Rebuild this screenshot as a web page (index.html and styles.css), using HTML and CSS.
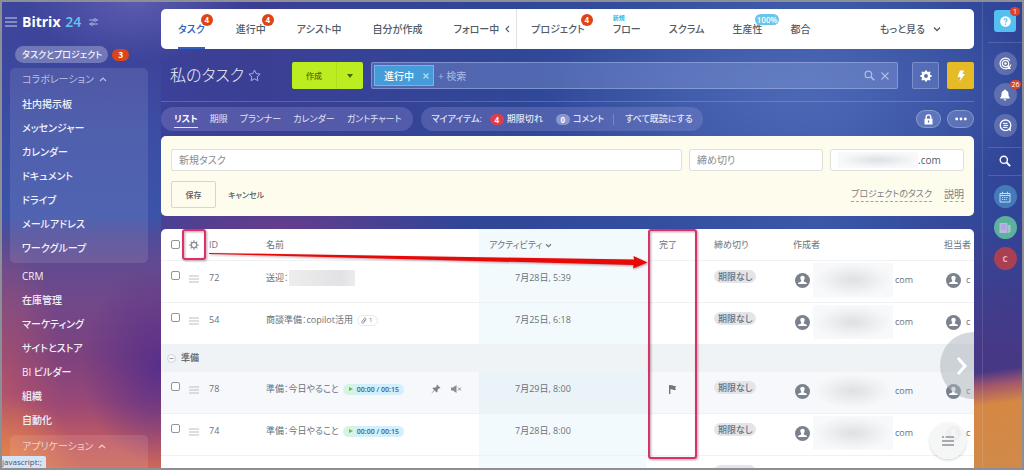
FILE: index.html
```html
<!DOCTYPE html>
<html lang="ja">
<head>
<meta charset="utf-8">
<title>私のタスク - Bitrix 24</title>
<link rel="stylesheet" href="styles.css">
</head>
<body>
<svg class="defs" aria-hidden="true">
  <symbol id="i-user" viewBox="0 0 16 16"><circle cx="8" cy="8" r="8" fill="#7b828d"/><path d="M8 3c1.700 0 2.500 1.200 2.300 2.700-.1.900-.5 1.700-.9 2.100v1.200l2.600 1.100c.5.200.7.600.7 1.700H3.300c0-1.100.2-1.500.7-1.700l2.600-1.100V7.800c-.4-.4-.8-1.200-.9-2.100C5.500 4.200 6.300 3 8 3z" fill="#fff"/></symbol>
  <symbol id="i-drag" viewBox="0 0 10 8"><path d="M0 1h10M0 4h10M0 7h10" stroke="#b9bec4" stroke-width="1.200"/></symbol>
  <symbol id="i-up" viewBox="0 0 8 6"><path d="M1 5l3-3 3 3" fill="none" stroke="currentColor" stroke-width="1.200"/></symbol>
  <symbol id="i-down" viewBox="0 0 8 6"><path d="M1 1.500l3 3 3-3" fill="none" stroke="currentColor" stroke-width="1.300"/></symbol>
  <symbol id="i-search" viewBox="0 0 12 12"><circle cx="4.800" cy="4.800" r="3.600" fill="none" stroke="currentColor" stroke-width="1.400"/><path d="M7.500 7.500l3.700 3.700" stroke="currentColor" stroke-width="1.800"/></symbol>
  <symbol id="i-gear" viewBox="0 0 12 12"><circle cx="6" cy="6" r="3.200" fill="none" stroke="currentColor" stroke-width="var(--ring)"/><path d="M6 .4v2M6 9.600v2M.4 6h2M9.600 6h2M2 2l1.500 1.500M8.500 8.500L10 10M10 2L8.500 3.500M3.500 8.500L2 10" stroke="currentColor" stroke-width="var(--tooth)"/></symbol>
</svg>
<div class="app">
  <aside class="sidebar">
    <header class="brand">
      <button class="plain" aria-label="メニュー"><svg width="12" height="10" viewBox="0 0 12 10"><path d="M0 1h12M0 5h12M0 9h12" stroke="#c9d0ee" stroke-width="1.200"/></svg></button>
      <a href="#" class="logo">Bitrix <span>24</span></a>
      <button class="plain sliders" aria-label="設定"><svg width="9" height="8" viewBox="0 0 9 8"><path d="M0 2h9M0 6h9" stroke="#a9b3de"/><circle cx="6" cy="2" r="1.300" fill="#4c57a9" stroke="#c0c8ea" stroke-width=".8"/><circle cx="3" cy="6" r="1.300" fill="#4c57a9" stroke="#c0c8ea" stroke-width=".8"/></svg></button>
    </header>
    <div class="current"><a href="#">タスクとプロジェクト</a><span class="badge wide">3</span></div>
    <nav class="menu">
      <div class="group">
        <button class="group-title">コラボレーション <svg width="8" height="6"><use href="#i-up"/></svg></button>
        <a href="#">社内掲示板</a><a href="#">メッセンジャー</a><a href="#">カレンダー</a><a href="#">ドキュメント</a><a href="#">ドライブ</a><a href="#">メールアドレス</a><a href="#">ワークグループ</a>
      </div>
      <div class="single">
        <a href="#">CRM</a><a href="#">在庫管理</a><a href="#">マーケティング</a><a href="#">サイトとストア</a><a href="#">BI ビルダー</a><a href="#">組織</a><a href="#">自動化</a>
      </div>
      <div class="group last">
        <button class="group-title">アプリケーション <svg width="8" height="6"><use href="#i-up"/></svg></button>
      </div>
    </nav>
    <div class="status">javascript:;</div>
  </aside>

  <main class="main">
    <nav class="tabs">
      <div class="tabset first">
        <a href="#" class="active">タスク<span class="badge float">4</span></a>
        <a href="#">進行中<span class="badge float">4</span></a>
        <a href="#">アシスト中</a>
        <a href="#">自分が作成</a>
        <a href="#">フォロー中</a>
        <button class="plain collapse" aria-label="折りたたむ"><svg width="5" height="8" viewBox="0 0 5 8"><path d="M4 1L1 4l3 3" fill="none" stroke="#525c69" stroke-width="1.100"/></svg></button>
      </div>
      <div class="tabset second">
        <a href="#">プロジェクト<span class="badge float">4</span></a>
        <a href="#">フロー<span class="new">新規</span></a>
        <a href="#">スクラム</a>
        <a href="#">生産性<span class="percent">100%</span></a>
        <a href="#">都合</a>
      </div>
      <button class="more">もっと見る <svg width="8" height="6"><use href="#i-down"/></svg></button>
    </nav>

    <div class="titlebar">
      <h1>私のタスク</h1>
      <button class="plain star" aria-label="お気に入り"><svg width="13" height="13" viewBox="0 0 13 13"><path d="M6.500 1l1.700 3.600 3.900.5-2.900 2.700.7 3.900-3.400-1.900-3.400 1.900.7-3.900L.9 5.100l3.900-.5z" fill="none" stroke="#aab3dc"/></svg></button>
      <div class="create"><button>作成</button><button class="arrow" aria-label="その他"><svg width="6" height="4"><path d="M0 0h6L3 4z" fill="#4a6408"/></svg></button></div>
      <div class="search">
        <span class="chip">進行中 <button class="plain" aria-label="削除"><svg width="6" height="6" viewBox="0 0 6 6"><path d="M.5.5l5 5M5.500.5l-5 5" stroke="#b4dcf5" stroke-width="1.200"/></svg></button></span>
        <input type="text" placeholder="+ 検索" aria-label="検索">
        <button class="plain" aria-label="検索する"><svg width="11" height="11"><use href="#i-search" width="11" height="11"/></svg></button>
        <button class="plain" aria-label="クリア"><svg width="8" height="8" viewBox="0 0 8 8"><path d="M.5.5l7 7M7.500.5l-7 7" stroke="currentColor" stroke-width="1.200"/></svg></button>
      </div>
      <button class="square gear" aria-label="設定"><svg width="12" height="12"><use href="#i-gear"/></svg></button>
      <button class="square bolt" aria-label="自動化"><svg width="10" height="12" viewBox="0 0 10 12"><path d="M4 .5h4L6.500 4H9l-5.500 7.500L4.600 7H1.500z" fill="#fff"/></svg></button>
    </div>

    <div class="views">
      <div class="pill"><a href="#" class="on">リスト</a><a href="#">期限</a><a href="#">プランナー</a><a href="#">カレンダー</a><a href="#">ガントチャート</a></div>
      <div class="pill mine"><span>マイアイテム:</span><a href="#"><span class="count red">4</span>期限切れ</a><a href="#"><span class="count">0</span>コメント</a><a href="#" class="readall">すべて既読にする</a></div>
      <button class="round lock" aria-label="権限"><svg width="9" height="11" viewBox="0 0 9 11"><path d="M2.200 5V3.200a2.300 2.300 0 014.600 0V5" fill="none" stroke="#fff" stroke-width="1.400"/><path d="M.5 4.700h8v5.800h-8z" fill="#fff"/><path d="M4.500 6.500v2" stroke="#5368b4" stroke-width="1.200"/></svg></button>
      <button class="round dots" aria-label="その他"><svg width="12" height="4" viewBox="0 0 12 4"><circle cx="1.700" cy="2" r="1.400" fill="#fff"/><circle cx="6" cy="2" r="1.400" fill="#fff"/><circle cx="10.300" cy="2" r="1.400" fill="#fff"/></svg></button>
    </div>

    <form class="quick">
      <div class="fields">
        <input class="name" type="text" placeholder="新規タスク" aria-label="新規タスク">
        <input type="text" placeholder="締め切り" aria-label="締め切り">
        <div class="owner"><span class="smudge"></span><input type="text" value=".com" aria-label="担当者"></div>
      </div>
      <div class="actions">
        <button type="button" class="save">保存</button>
        <button type="button" class="plain cancel">キャンセル</button>
        <a href="#" class="push">プロジェクトのタスク</a><a href="#">説明</a>
      </div>
    </form>

    <section class="board">
      <div class="sheet">
      <table>
        <colgroup><col class="c-check"><col class="c-drag"><col class="c-id"><col><col class="c-act"><col class="c-done"><col class="c-due"><col class="c-by"><col class="c-to"></colgroup>
        <thead><tr>
          <th><input type="checkbox" aria-label="すべて選択"></th>
          <th><button class="plain cog" aria-label="列の設定"><svg width="10" height="10" viewBox="0 0 12 12"><use href="#i-gear"/></svg></button></th>
          <th>ID</th><th>名前</th><th class="act">アクティビティ <svg width="7" height="5" viewBox="0 0 8 6"><use href="#i-down"/></svg></th><th>完了</th><th>締め切り</th><th>作成者</th><th>担当者</th>
        </tr></thead>
        <tbody>
          <tr>
            <td><input type="checkbox" aria-label="72"></td><td><svg class="drag" width="10" height="8"><use href="#i-drag"/></svg></td><td>72</td>
            <td><a href="#">送迎：</a><span class="smudge title"></span></td>
            <td class="act">7月28日, 5:39</td><td></td><td><span class="due">期限なし</span></td>
            <td><span class="person"><svg width="15" height="15"><use href="#i-user" width="15" height="15"/></svg><span class="smudge"></span>com</span></td><td><span class="person short"><svg width="15" height="15"><use href="#i-user" width="15" height="15"/></svg>c</span></td>
          </tr>
          <tr>
            <td><input type="checkbox" aria-label="54"></td><td><svg class="drag" width="10" height="8"><use href="#i-drag"/></svg></td><td>54</td>
            <td><a href="#">商談準備：copilot活用</a><span class="clip"><svg width="6" height="7" viewBox="0 0 6 7"><path d="M5 2.500L2.800 5.700C1.800 7 .1 5.800 1 4.500L3.200 1.400c.8-1 2-.1 1.400.8L2.700 4.900" fill="none" stroke="#858b94" stroke-width=".9"/></svg>1</span></td>
            <td class="act">7月25日, 6:18</td><td></td><td><span class="due">期限なし</span></td>
            <td><span class="person"><svg width="15" height="15"><use href="#i-user" width="15" height="15"/></svg><span class="smudge"></span>com</span></td><td><span class="person short"><svg width="15" height="15"><use href="#i-user" width="15" height="15"/></svg>c</span></td>
          </tr>
          <tr class="section"><td colspan="9"><button class="plain minus" aria-label="折りたたむ"><svg width="9" height="9" viewBox="0 0 9 9"><circle cx="4.500" cy="4.500" r="4" fill="#f7f9fa" stroke="#c6ccd2" stroke-width=".8"/><path d="M2.500 4.500h4" stroke="#8b929b" stroke-width=".9"/></svg></button>準備</td></tr>
          <tr class="hover">
            <td><input type="checkbox" aria-label="78"></td><td><svg class="drag" width="10" height="8"><use href="#i-drag"/></svg></td><td>78</td>
            <td><div class="named"><a href="#">準備：今日やること</a><span class="timer">00:00 / 00:15</span>
              <span class="tools"><svg width="10" height="10" viewBox="0 0 10 10"><path d="M6 .5l3.500 3.500-1 .4-.6-.2-1.500 1.700.2 1.800-.9.8-2-2L.8 9.300l-.2-.2 2.600-3L1.500 4.400l.8-.9 1.800.2 1.700-1.500-.2-.7z" fill="#7b828c"/></svg><svg width="11" height="8" viewBox="0 0 11 8"><path d="M0 2.500h2L5.500 0v8L2 5.500H0z" fill="#868c95"/><path d="M7 2.500l3 3M10 2.500l-3 3" stroke="#868c95"/></svg></span></div></td>
            <td class="act">7月29日, 8:00</td><td class="flag"><svg width="7" height="9" viewBox="0 0 7 9"><path d="M.7 0v9" stroke="#6f7680" stroke-width="1.400"/><path d="M1 .3h2.800l.6.8H7L6.200 3l.8 2H4l-.6-.7H1z" fill="#6f7680"/></svg></td><td><span class="due">期限なし</span></td>
            <td><span class="person"><svg width="15" height="15"><use href="#i-user" width="15" height="15"/></svg><span class="smudge"></span>com</span></td><td><span class="person short"><svg width="15" height="15"><use href="#i-user" width="15" height="15"/></svg>c</span></td>
          </tr>
          <tr>
            <td><input type="checkbox" aria-label="74"></td><td><svg class="drag" width="10" height="8"><use href="#i-drag"/></svg></td><td>74</td>
            <td><div class="named"><a href="#">準備：今日やること</a><span class="timer">00:00 / 00:15</span></div></td>
            <td class="act">7月28日, 8:00</td><td></td><td><span class="due">期限なし</span></td>
            <td><span class="person"><svg width="15" height="15"><use href="#i-user" width="15" height="15"/></svg><span class="smudge"></span>com</span></td><td><span class="person short"><svg width="15" height="15"><use href="#i-user" width="15" height="15"/></svg>c</span></td>
          </tr>
          <tr><td></td><td></td><td></td><td></td><td class="act"></td><td></td><td><span class="due">&nbsp;</span></td><td></td><td></td></tr>
        </tbody>
      </table>
      <button class="next" aria-label="次へ"><svg width="12" height="20" viewBox="0 0 12 20"><path d="M2 2l7 8-7 8" fill="none" stroke="#fff" stroke-width="3"/></svg></button>
      <button class="fab" aria-label="一覧"><svg width="12" height="10" viewBox="0 0 12 10"><path d="M0 1h2M3.500 1H12M0 5h12M0 9h12" stroke="#8d9298" stroke-width="1.300"/></svg></button>
      </div>
      <svg class="notes" width="560" height="236" aria-hidden="true">
        <rect x="22" y="1" width="22" height="29" rx="2" fill="none" stroke="#dc2f6b" stroke-width="2"/>
        <rect x="488" y="1" width="47" height="228" rx="2" fill="none" stroke="#d63469" stroke-width="2"/>
        <path d="M48 24l425 6.500-.5-3.500 14 6.500-14.500 6 .5-3.500L48 25z" fill="#e80808"/>
      </svg>
    </section>
  </main>

  <aside class="rail">
    <button class="help" aria-label="ヘルプ"><svg width="11" height="11" viewBox="0 0 11 11"><circle cx="5.500" cy="5.500" r="5.300" fill="#fff"/><path d="M4 4.300c0-2 3-2 3 0 0 1.200-1.500 1.100-1.500 2.300M5.500 7.500v1.200" fill="none" stroke="#4cb5e6" stroke-width="1.100"/></svg><span class="mark">1</span></button>
    <hr>
    <button class="disc" aria-label="コパイロット"><svg width="13" height="13" viewBox="0 0 13 13"><path d="M11.800 7.500A5.400 5.400 0 1111 3.500" fill="none" stroke="#fff" stroke-width="1.200"/><circle cx="6.500" cy="6.500" r="3.200" fill="none" stroke="#fff" stroke-width="1.200"/><circle cx="6.500" cy="6.500" r="1.300" fill="#fff"/><path d="M8.600 8.600l2.200 2.700H6.500" fill="none" stroke="#fff" stroke-width="1.200"/></svg></button>
    <button class="disc" aria-label="通知"><svg width="10" height="12" viewBox="0 0 10 12"><path d="M5 .5a1 1 0 011 1c1.700.5 2.500 1.800 2.500 3.500 0 2 .4 2.800 1.300 3.700v.8H.2v-.8C1.100 7.800 1.500 7 1.500 5 1.500 3.300 2.300 2 4 1.500a1 1 0 011-1zM3.600 10.200h2.800a1.400 1.400 0 01-2.800 0z" fill="#fff"/></svg><span class="mark">26</span></button>
    <button class="disc" aria-label="チャット"><svg width="13" height="13" viewBox="0 0 13 13"><circle cx="6.500" cy="6.300" r="5.300" fill="none" stroke="#fff" stroke-width="1.300"/><path d="M9 10.500l3 1.800-.6-3.800z" fill="#fff"/><path d="M4 4.400h4.500M4.500 6.400h4.500M4 8.400h4.500" stroke="#fff"/></svg></button>
    <hr>
    <button class="plain find" aria-label="検索"><svg width="12" height="12"><use href="#i-search"/></svg></button>
    <hr>
    <button class="disc cal" aria-label="カレンダー"><svg width="12" height="12" viewBox="0 0 12 12"><path d="M1 2.500h10v8.500H1zM1 4.500h10M3.500.8v2.500M8.500.8v2.500" fill="none" stroke="#c8daf0"/><path d="M3 6.500h6M3 8.500h5" stroke="#c8daf0" stroke-dasharray="1.300 .8"/></svg></button>
    <button class="disc news" aria-label="ニュース"><svg width="12" height="12" viewBox="0 0 12 12"><path d="M.5 1h8v10h-8z" fill="#b9b6e4"/><path d="M9.200 3h2.300v6.500L10 11H9.200z" fill="#a9c8cf"/><path d="M2 3h5M2 5h5M2 7h5" stroke="#9c95cf" stroke-width=".8"/></svg></button>
    <button class="disc user">C</button>
  </aside>
</div>
</body>
</html>
```
FILE: styles.css
```css
* { box-sizing: border-box; }

body {
  margin: 0;
  font-family: "Open Sans", "Noto Sans CJK JP", sans-serif;
  font-size: 10px;
  line-height: 16px;
  font-feature-settings: "palt";
  color: #525c69;
}

a { color: inherit; text-decoration: none; white-space: nowrap; }

button, input {
  font: inherit;
  font-feature-settings: inherit;
  color: inherit;
  margin: 0;
  padding: 0;
}

button {
  display: inline-flex;
  align-items: center;
  justify-content: center;
  border: 0;
  white-space: nowrap;
}

svg { display: block; flex: none; }
.defs { position: absolute; width: 0; height: 0; }
.plain { background: none; }

.app {
  display: grid;
  grid-template-columns: 159px minmax(0, 1fr) 48px;
  height: 100vh;
  overflow: hidden;
  border: 2px solid #8c8f96;
  background:
    radial-gradient(ellipse 110px 60px at 13% 0%, rgba(112, 108, 190, .6), rgba(112, 108, 190, 0)),
    radial-gradient(ellipse 180px 30px at 27% 48%, rgba(120, 60, 136, .7), rgba(120, 60, 136, 0)),
    linear-gradient(172deg, rgba(162, 86, 108, 0) 79%, #a2566c 82%, #d58844 86%, #d08a4a 100%) 100% 0 / 12% 100% no-repeat,
    linear-gradient(180deg, rgba(71, 56, 134, 0) 45%, #473886 75%) 100% 0 / 12% 100% no-repeat,
    radial-gradient(ellipse 250px 120px at 78% 20%, rgba(80, 108, 184, .8), rgba(80, 108, 184, 0)),
    linear-gradient(90deg, #3d459c, #3b3f94 25%, #304798 50%, #3a57a8 80%, #304496);
}

/* Left menu */
.sidebar {
  position: relative;
  overflow: hidden;
  color: #f2f2fb;
  background:
    radial-gradient(ellipse 75px 75px at 0% 100%, rgba(232, 138, 72, .95), rgba(220, 110, 80, 0)),
    radial-gradient(ellipse 80px 100px at 100% 78%, rgba(86, 46, 138, .95), rgba(86, 46, 138, 0)),
    radial-gradient(ellipse 60px 150px at 0% 82%, rgba(205, 95, 95, .5), rgba(205, 95, 95, 0)),
    linear-gradient(180deg, rgba(58, 76, 164, 0) 8%, #3b4ea4 28%, #3c53a8 46%, #4f4c9a 50%, #614a90 56%, #71488a 64%, #7d427e 76%, #9a4876 86%, #c25c62 95%, #cc6858);
}

.brand { display: flex; align-items: center; padding: 9px 0 0 3px; height: 31px; }
.logo { margin-left: 5px; font-size: 14px; line-height: 22px; font-weight: 700; color: #fff; }
.logo span { margin-left: 1px; color: #65c3f4; font-weight: 600; }
.sliders { margin-left: 8px; }

.current { display: flex; align-items: center; gap: 4px; padding: 13px 0 0 13px; }
.current a {
  padding: 0 6px 0 7px;
  border-radius: 9px;
  line-height: 17px;
  background: rgba(255, 255, 255, .27);
  font-size: 9px;
  font-weight: 500;
}

.badge {
  display: inline-block;
  min-width: 12px;
  height: 12px;
  border-radius: 6px;
  background: #dd4417;
  color: #fff;
  font-size: 8px;
  line-height: 12px;
  font-weight: 700;
  text-align: center;
}
.badge.wide { width: 17px; }

.menu { padding: 5px 13px 0 8px; font-weight: 500; }
.menu a { display: block; padding-left: 12px; line-height: 24px; }
.group { padding-bottom: 3px; border-radius: 5px; background: rgba(255, 255, 255, .1); }
.group-title {
  justify-content: flex-start;
  gap: 5px;
  width: 100%;
  height: 22px;
  margin-bottom: 2px;
  padding-left: 12px;
  background: none;
  color: #b9bfe3;
  font-weight: 400;
}
.single { padding: 1px 0 3px; }
.group.last { min-height: 60px; }
.group.last .group-title { color: #f0cfd2; }

.status {
  position: absolute;
  left: 0;
  bottom: 0;
  padding: 0 4px 0 0;
  border-radius: 0 2px 0 0;
  background: #d5e3f7;
  color: #4c5560;
  font-size: 8px;
  line-height: 12px;
}

/* Main column */
.main { display: flex; flex-direction: column; padding-top: 7px; min-width: 0; min-height: 0; }

.tabs {
  display: flex;
  flex: none;
  height: 40px;
  border-radius: 5px;
  background: #fff;
  font-weight: 500;
}
.tabset { display: flex; gap: 31px; padding-left: 14px; }
.tabset.first { padding: 0 6px 0 17px; border-right: 1px solid #dfe2e6; }
.tabset.second { gap: 28px; }
.tabs a { position: relative; line-height: 40px; }
.tabs .active { color: #2f62c0; }
.tabs .active::after {
  content: "";
  position: absolute;
  left: 0;
  right: 0;
  bottom: 0;
  height: 2px;
  background: #2f62c0;
}
.collapse { margin-left: -25px; }
.badge.float { position: absolute; top: 5px; right: -8px; }
.new { position: absolute; top: 5px; left: 0; font-size: 6px; line-height: 8px; color: #38b6e0; font-weight: 700; }
.percent {
  position: absolute;
  top: 5px;
  right: -17px;
  padding: 0 2px;
  border-radius: 6px;
  background: #6ac4ee;
  color: #fff;
  font-size: 8px;
  line-height: 11px;
  font-weight: 600;
}
.more { gap: 8px; margin-left: auto; padding-right: 33px; background: none; font-weight: 500; }

.titlebar { display: flex; flex: none; align-items: center; padding: 13px 0 12px 9px; border-bottom: 1px solid rgba(255, 255, 255, .18); }
h1 { margin: 0; color: #eef0fb; font-size: 16px; line-height: 27px; font-weight: 300; white-space: nowrap; width: 78px; }
.create { display: flex; height: 27px; margin-left: 31px; border-radius: 2px; overflow: hidden; }
.create button { width: 44px; background: #bbed21; color: #53700b; font-size: 8px; font-weight: 500; }
.create .arrow { width: 27px; border-left: 1px solid #aede1d; }

.search {
  display: flex;
  flex: 1;
  align-items: center;
  gap: 6px;
  min-width: 0;
  height: 27px;
  margin: 0 14px 0 8px;
  padding: 0 8px 0 2px;
  border: 1px solid rgba(170, 190, 235, .5);
  border-radius: 2px;
  background: rgba(150, 170, 225, .33);
  color: #aebbe2;
}
.chip {
  display: flex;
  align-items: center;
  justify-content: space-between;
  width: 60px;
  height: 21px;
  padding: 0 4px 0 9px;
  border: 1px solid #6fb9ea;
  background: #469cd8;
  color: #fff;
  font-weight: 500;
  white-space: nowrap;
}
.search input { flex: 1; min-width: 0; margin-left: -2px; border: 0; background: none; }
.search input::placeholder { color: #aebbe2; opacity: 1; }

.square { width: 27px; height: 27px; border-radius: 2px; color: #fff; }
.gear { --ring: 2.500; --tooth: 2; margin-right: 8px; border: 1px solid rgba(180, 195, 235, .4); background: rgba(150, 170, 225, .25); }
.bolt { background: #e5bc27; }

.views { display: flex; flex: none; align-items: center; padding: 5px 0; color: #e2e6f7; font-size: 9px; }
.pill { display: flex; gap: 12px; padding: 0 12px 0 13px; border-radius: 12px; background: rgba(150, 150, 215, .3); line-height: 24px; }
.pill .on { position: relative; color: #fff; font-weight: 700; }
.pill .on::after { content: ""; position: absolute; left: 0; right: 0; bottom: 3px; height: 1px; background: #e2e6f7; }
.mine { gap: 8px; margin-left: 8px; padding: 0 10px; font-weight: 500; }
.mine a { display: flex; align-items: center; gap: 3px; }
.mine a + a { margin-left: 5px; }
.count { width: 14px; border-radius: 6px; background: rgba(175, 185, 228, .6); color: #fff; font-size: 8px; line-height: 11px; font-weight: 700; text-align: center; }
.count.red { background: #d9404f; }
.mine .readall { margin-left: 1px; }
.mine .readall::before { content: ""; width: 1px; height: 11px; margin-right: 8px; background: #7c86c2; }
.round { height: 18px; border: 1px solid rgba(200, 210, 240, .4); border-radius: 9px; background: rgba(170, 190, 235, .3); }
.lock { width: 25px; margin-left: auto; }
.dots { width: 27px; margin-left: 6px; }

.quick { flex: none; padding: 13px 10px 8px; border-radius: 5px; background: #fefded; }
.fields { display: grid; grid-template-columns: minmax(0, 1fr) 134px 134px; gap: 7px; }
.fields input, .owner { width: 100%; height: 22px; padding: 0 7px; border: 1px solid #dfe0db; border-radius: 2px; background: #fff; }
.fields input::placeholder { color: #868b92; opacity: 1; }
.owner { display: flex; align-items: center; }
.fields .owner input { flex: 1; min-width: 0; height: 18px; padding: 0; border: 0; }
.owner .smudge { width: 80px; height: 16px; }
.actions { display: flex; align-items: center; gap: 12px; margin-top: 10px; }
.actions a { border-bottom: 1px dashed #a0a4a8; color: #777d86; line-height: 14px; }
.actions .push { margin-left: auto; font-size: 9px; }
.save { width: 45px; height: 27px; border: 1px solid #d5d6d0; border-radius: 2px; background: none; font-size: 8px; font-weight: 500; }
.cancel { font-size: 8px; font-weight: 500; }

.smudge { display: inline-block; flex: none; background: radial-gradient(ellipse 50% 50%, #dfe0e3, rgba(240, 241, 243, .9) 70%, rgba(247, 248, 249, .9)); }
.smudge.title { width: 66px; height: 16px; background: linear-gradient(90deg, #ededee, #e2e2e4 80%, #ececed); vertical-align: top; }

/* Task list */
.board { position: relative; flex: 1; min-height: 0; margin-top: 13px; }
.sheet { position: relative; height: 100%; overflow: hidden; border-radius: 5px 5px 0 0; background: #fff; }
.notes { position: absolute; left: 0; top: 0; filter: drop-shadow(1px 1px 1px rgba(90, 0, 20, .4)); pointer-events: none; }

table { width: 100%; table-layout: fixed; border-collapse: separate; border-spacing: 0; font-size: 9px; color: #6a717b; }
.c-check { width: 22px; }
.c-drag { width: 23px; }
.c-id { width: 52px; }
.c-act { width: 168px; }
.c-done { width: 57px; }
.c-due { width: 80px; }
.c-by { width: 151px; }
.c-to { width: 39px; }

th, td { padding: 0; border-bottom: 1px solid #eff1f3; text-align: left; white-space: nowrap; }
th { height: 32px; font-weight: 400; vertical-align: middle; }
td { height: 42px; padding-top: 9px; vertical-align: top; }
th:nth-child(1), td:nth-child(1) { padding-left: 10px; }
th:nth-child(2), td:nth-child(2) { padding-left: 6px; }
th:nth-child(3), td:nth-child(3) { padding-left: 3px; }
th:nth-child(4), td:nth-child(4) { padding-left: 8px; }
th:nth-child(6), td:nth-child(6) { padding-left: 12px; }
th:nth-child(7), td:nth-child(7) { padding-left: 10px; }
th:nth-child(8) { padding-left: 9px; }
td:nth-child(8) { padding-left: 11px; }
th:nth-child(9) { padding-left: 9px; }
td:nth-child(9) { padding-left: 11px; }
.act { background: #f3fafd; }
th.act { padding-left: 10px; }
td.act { padding-left: 36px; }
th.act svg { display: inline-block; }

input[type="checkbox"] {
  appearance: none;
  display: block;
  width: 9px;
  height: 9px;
  border: 1px solid #8f959d;
  border-radius: 2px;
  background: #fff;
}
td input[type="checkbox"] { margin-top: 1px; }
.cog { --ring: 1.500; --tooth: 1.500; display: flex; color: #8b929b; }
.drag { margin-top: 5px; }
.due { display: inline-block; min-width: 42px; padding: 0 4px; border-radius: 7px; background: #e3e5e9; font-weight: 500; line-height: 13px; text-align: center; vertical-align: top; }
.person { display: flex; align-items: center; height: 20px; line-height: 20px; }
.person .smudge { width: 80px; height: 34px; margin: 0 2px 0 3px; }
.person.short svg { margin-right: 5px; }
.clip { display: inline-flex; align-items: center; gap: 2px; margin-left: 4px; padding: 0 5px 0 3px; border: 1px solid #e6e8eb; border-radius: 6px; font-size: 6px; line-height: 9px; vertical-align: middle; }
.named { display: flex; align-items: center; }
.timer { display: flex; align-items: center; gap: 4px; margin-left: 4px; padding: 0 5px 0 6px; border-radius: 6px; background: linear-gradient(90deg, #d9f5dc, #d2effb 30%); color: #4a6270; font-size: 7px; font-weight: 600; line-height: 11px; }
.timer::before { content: ""; border: solid transparent; border-width: 2px 0 2px 4px; border-left-color: #6cbf2e; }
.tools { display: flex; align-items: center; gap: 10px; margin-left: auto; padding-right: 17px; }
.flag svg { margin: 4px 0 0 10px; }

.section td { height: 27px; padding: 5px 0 5px 6px; border: 0; background: #eff3f6; font-weight: 700; }
.minus { margin-right: 5px; vertical-align: middle; }
.hover td { background: #f6f8fb; }
.hover td.act { background: #eaf3f7; }

.next { position: absolute; right: -33px; top: 103px; width: 67px; height: 67px; padding-right: 24px; border-radius: 50%; background: rgba(170, 178, 186, .5); }
.fab { position: absolute; right: 8px; bottom: 9px; width: 36px; height: 36px; border-radius: 50%; background: rgba(244, 245, 246, .95); box-shadow: 0 1px 3px rgba(0, 0, 0, .2); }

/* Right rail */
.rail { display: flex; flex-direction: column; align-items: center; margin-left: 8px; padding: 8px 0 0 5px; border-left: 1px solid rgba(255, 255, 255, .12); color: #fff; }
.rail hr { width: 100%; margin: 10px 0 9px; border: 0; border-top: 1px solid rgba(255, 255, 255, .15); }
.help { position: relative; flex: none; width: 22px; height: 22px; border-radius: 3px; background: #55bff0; }
.disc { position: relative; flex: none; width: 23px; height: 23px; border-radius: 50%; background: rgba(255, 255, 255, .2); }
.disc + .disc { margin-top: 8px; }
.mark { position: absolute; right: -4px; top: -3px; min-width: 10px; padding: 0 1px; border-radius: 5px; background: #d9432f; font-size: 7px; line-height: 9px; }
.find { height: 12px; margin: -2px 0; flex: none; }
.cal { background: #457ab8; }
.news { background: #5cb09c; }
.user { background: #a83f52; color: #e8b5c0; font-size: 8px; font-weight: 700; }
```
